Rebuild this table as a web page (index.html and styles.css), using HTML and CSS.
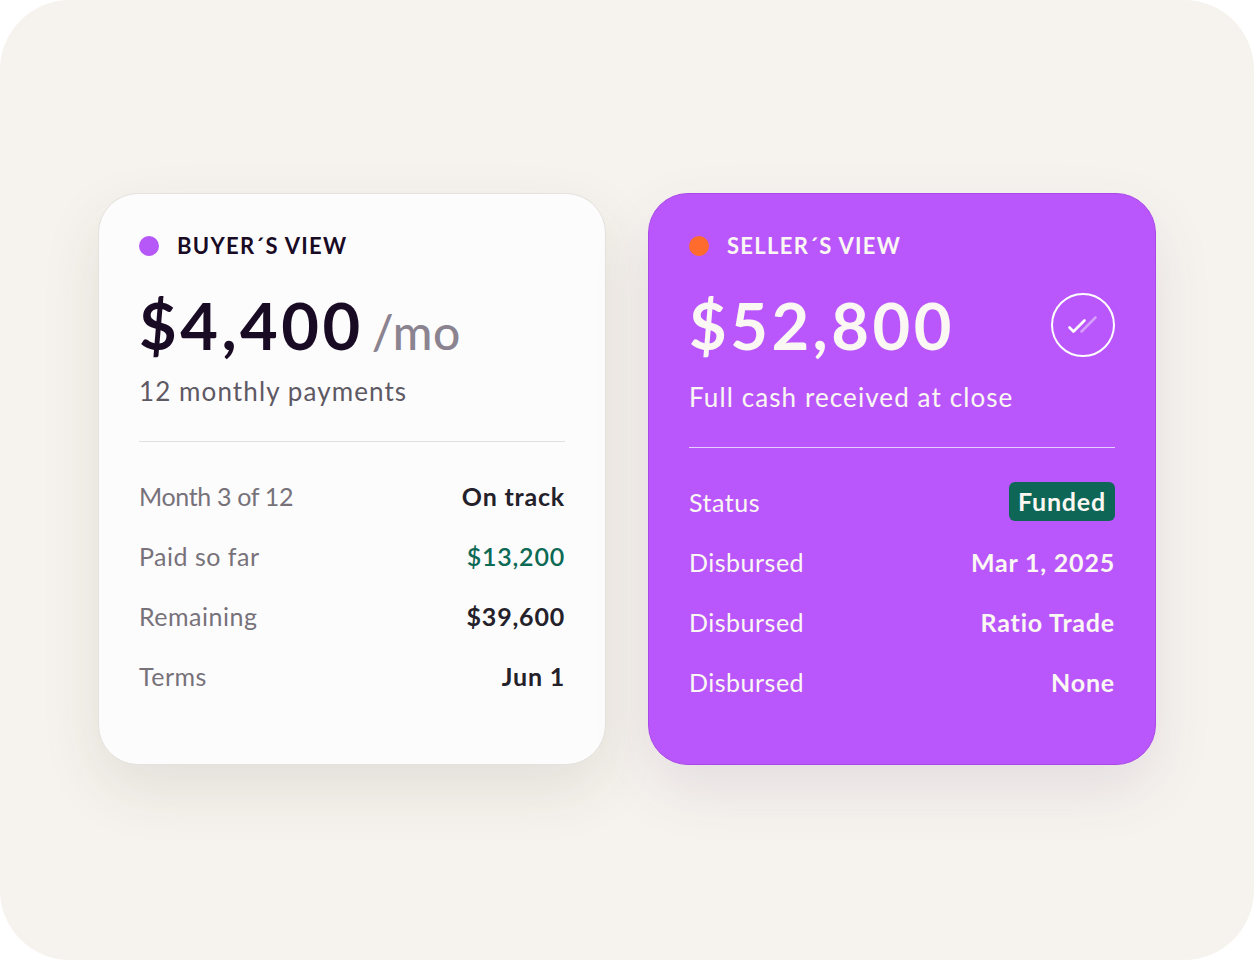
FILE: index.html
```html
<!DOCTYPE html>
<html lang="en">
<head>
<meta charset="utf-8">
<title>Buyer and Seller View</title>
<link rel="stylesheet" href="styles.css">
</head>
<body>
<div class="stage">
  <div class="cards">
    <section class="card card-buyer">
      <div class="card-head">
        <span class="dot dot-purple"></span>
        <span class="head-label">BUYER´S VIEW</span>
      </div>
      <div class="price-row">
        <span class="price">$4,400</span><span class="unit">/mo</span>
      </div>
      <p class="sub">12 monthly payments</p>
      <hr class="divider">
      <div class="rows">
        <div class="row"><span class="label label-tight">Month 3 of 12</span><span class="value">On track</span></div>
        <div class="row"><span class="label">Paid so far</span><span class="value value-green">$13,200</span></div>
        <div class="row"><span class="label">Remaining</span><span class="value">$39,600</span></div>
        <div class="row"><span class="label">Terms</span><span class="value">Jun 1</span></div>
      </div>
    </section>

    <section class="card card-seller">
      <div class="card-head">
        <span class="dot dot-orange"></span>
        <span class="head-label">SELLER´S VIEW</span>
      </div>
      <div class="price-row price-row-split">
        <span class="price">$52,800</span>
        <span class="check-badge">
          <svg width="60" height="60" viewBox="0 0 60 60" fill="none" aria-hidden="true">
            <path d="M28.5 36.5 L42.5 22.5" stroke="rgba(255,255,255,0.42)" stroke-width="2.6" stroke-linecap="round"/>
            <path d="M16.5 32.5 L20.5 36.5 L31.5 25.5" stroke="#ffffff" stroke-width="2.6" stroke-linecap="round" stroke-linejoin="round"/>
          </svg>
        </span>
      </div>
      <p class="sub sub-light">Full cash received at close</p>
      <hr class="divider divider-light">
      <div class="rows">
        <div class="row"><span class="label">Status</span><span class="badge">Funded</span></div>
        <div class="row"><span class="label">Disbursed</span><span class="value">Mar 1, 2025</span></div>
        <div class="row"><span class="label">Disbursed</span><span class="value">Ratio Trade</span></div>
        <div class="row"><span class="label">Disbursed</span><span class="value">None</span></div>
      </div>
    </section>
  </div>
</div>
</body>
</html>
```

FILE: styles.css
```css
* { box-sizing: border-box; }

html, body {
  margin: 0;
  padding: 0;
  background: #ffffff;
}

body {
  font-family: "Lato", "Noto Sans", "Liberation Sans", sans-serif;
  -webkit-font-smoothing: antialiased;
}

.stage {
  width: 1254px;
  height: 960px;
  background: #f6f3ee;
  border-radius: 70px;
  display: flex;
  align-items: center;
  justify-content: center;
}

.cards {
  display: flex;
  gap: 42px;
  align-items: stretch;
  margin-top: -3px;
}

.card {
  width: 508px;
  height: 572px;
  border-radius: 40px;
  padding: 40px 40px 0 40px;
  display: flex;
  flex-direction: column;
}

.card-buyer {
  background: #fdfcfd;
  border: 1px solid #e4e1de;
  box-shadow: 0 24px 60px rgba(60, 45, 30, 0.10);
  color: #1a0b25;
}

.card-seller {
  background: #b957fc;
  border: 1px solid #a94ae8;
  box-shadow: 0 24px 60px rgba(80, 40, 110, 0.10);
  color: #fbf7f2;
}

.card-head {
  display: flex;
  align-items: center;
  gap: 18px;
  height: 24px;
}

.dot {
  width: 20px;
  height: 20px;
  border-radius: 50%;
  flex: none;
}
.dot-purple { background: #b657f8; }
.dot-orange { background: #ff6b2c; }

.head-label {
  font-size: 22px;
  font-weight: 700;
  letter-spacing: 1.3px;
  line-height: 24px;
}

.price-row {
  display: flex;
  align-items: baseline;
  gap: 8px;
  margin-top: 35px;
  height: 64px;
}

.price-row-split {
  justify-content: space-between;
  align-items: center;
}

.price {
  font-size: 65px;
  font-weight: 700;
  line-height: 64px;
  letter-spacing: 3.5px;
}

.unit {
  font-size: 48px;
  font-weight: 500;
  color: #8b8390;
  line-height: 64px;
  letter-spacing: 0.5px;
}

.check-badge {
  width: 64px;
  height: 64px;
  border: 2px solid #ffffff;
  border-radius: 50%;
  display: flex;
  align-items: center;
  justify-content: center;
  flex: none;
}

.sub {
  margin: 19px 0 0 0;
  font-size: 26px;
  line-height: 30px;
  color: #5e5963;
  font-weight: 400;
  letter-spacing: 1.1px;
}

.sub-light {
  margin-top: 25px;
  color: #fbf7f2;
}

.divider {
  margin: 35px 0 0 0;
  border: 0;
  height: 1px;
  background: #e3dfe0;
}

.divider-light {
  background: #e7cffd;
}

.rows {
  margin-top: 39px;
  display: flex;
  flex-direction: column;
  gap: 30px;
}

.row {
  display: flex;
  justify-content: space-between;
  align-items: center;
  height: 30px;
  font-size: 25px;
}

.label {
  color: #77727a;
  font-weight: 400;
  letter-spacing: 0.5px;
}

.label-tight {
  letter-spacing: -0.35px;
}

.card-seller .label {
  color: #fbf7f2;
}

.value {
  font-weight: 700;
  color: #24212a;
  letter-spacing: 0.8px;
}

.card-seller .value {
  color: #fbf7f2;
}

.value-green {
  color: #0d6a55;
  font-weight: 600;
}

.badge {
  background: #0e6657;
  color: #fbf7f2;
  font-weight: 700;
  font-size: 25px;
  letter-spacing: 0.8px;
  border-radius: 6px;
  padding: 0 9px;
  height: 39px;
  line-height: 39px;
}
```
